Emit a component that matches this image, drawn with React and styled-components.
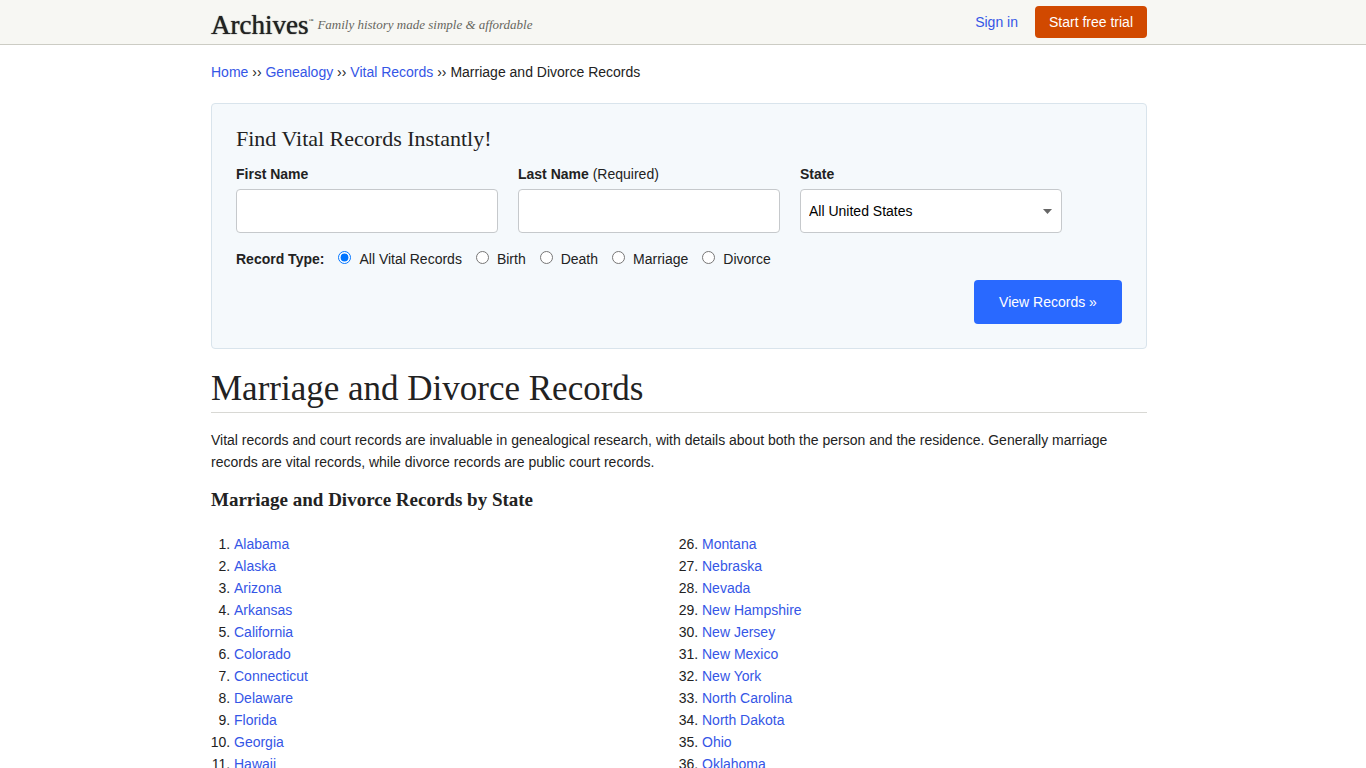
import { useState } from "react";
import styled, { createGlobalStyle, ThemeProvider } from "styled-components";

const theme = {
  sans: '"Liberation Sans", Arial, sans-serif',
  serif: '"Liberation Serif", Georgia, serif',
  text: "#222",
  link: "#3556e6",
  blue: "#2969ff",
  orange: "#d14900",
  radius: "4px",
};

const GlobalStyle = createGlobalStyle`
  * {
    box-sizing: border-box;
  }

  body {
    margin: 0;
    background: #fff;
    color: ${theme.text};
    font-family: ${theme.sans};
    font-size: 14px;
    line-height: 22px;
  }
`;

const Link = styled.a`
  color: ${({ theme }) => theme.link};
  text-decoration: none;

  &:hover {
    text-decoration: underline;
  }
`;

const Bar = styled.header`
  background: #f7f7f3;
  border-bottom: 1px solid #ccccc4;
  padding-right: 8px;
`;

const Container = styled.div`
  max-width: 936px;
  margin: 0 auto;
`;

const BarInner = styled(Container)`
  display: flex;
  justify-content: space-between;
  align-items: center;
  min-height: 44px;
`;

const Brand = styled.a`
  display: flex;
  align-items: center;
  padding-top: 6px;
  color: ${({ theme }) => theme.text};
  font-family: ${({ theme }) => theme.serif};
  text-decoration: none;
`;

const Logo = styled.span`
  font-size: 27px;
  line-height: 32px;
  text-shadow: 0 0 1px ${({ theme }) => theme.text};
`;

const Trademark = styled.sup`
  align-self: flex-start;
  margin-top: 8px;
  font-size: 5px;
  line-height: 8px;
`;

const Tagline = styled.span`
  margin-left: 4px;
  color: #66665e;
  font-size: 13px;
  font-style: italic;
`;

const Account = styled.nav`
  display: flex;
  align-items: center;
  gap: 17px;
`;

const TrialButton = styled.button`
  height: 32px;
  padding: 0 14px;
  border: none;
  border-radius: ${({ theme }) => theme.radius};
  background: ${({ theme }) => theme.orange};
  color: #fff;
  font: inherit;
  cursor: pointer;
`;

const Page = styled.main`
  padding-right: 8px;
  padding-bottom: 40px;
`;

const Breadcrumb = styled.nav`
  padding: 16px 0 20px;
`;

const Panel = styled.form`
  display: flex;
  flex-direction: column;
  padding: 24px;
  border: 1px solid #d9e4ec;
  border-radius: ${({ theme }) => theme.radius};
  background: #f5f9fc;
`;

const PanelTitle = styled.h2`
  margin: 0 0 13px;
  font-family: ${({ theme }) => theme.serif};
  font-size: 22px;
  font-weight: normal;
  line-height: 22px;
`;

const Fields = styled.div`
  display: flex;
  gap: 20px;
`;

const Field = styled.label`
  display: flex;
  flex: 0 1 262px;
  flex-direction: column;
  gap: 4px;
  min-width: 0;
`;

const TextInput = styled.input`
  width: 100%;
  height: 44px;
  padding: 0 8px;
  border: 1px solid #c6c9cc;
  border-radius: ${({ theme }) => theme.radius};
  background: #fff;
  font: inherit;
`;

const SelectWrap = styled.span`
  display: grid;
  align-items: center;

  & > * {
    grid-area: 1 / 1;
  }
`;

const Select = styled(TextInput)`
  appearance: none;
  color: #000;
`;

const Arrow = styled.svg`
  justify-self: end;
  margin-right: 10px;
  pointer-events: none;
`;

const RecordTypes = styled.fieldset`
  display: flex;
  align-items: center;
  gap: 14px;
  margin: 15px 0 10px;
  padding: 0;
  border: none;
`;

const Radio = styled.label`
  display: flex;
  align-items: center;
  gap: 8px;

  input {
    width: 13px;
    height: 13px;
    margin: 0 0 3px;
  }
`;

const SubmitButton = styled.button`
  align-self: flex-end;
  width: 148px;
  height: 44px;
  border: none;
  border-radius: ${({ theme }) => theme.radius};
  background: ${({ theme }) => theme.blue};
  color: #fff;
  font: inherit;
  cursor: pointer;
`;

const Title = styled.h1`
  margin: 18px 0 16px;
  padding-bottom: 1px;
  border-bottom: 1px solid #d8d8d4;
  font-family: ${({ theme }) => theme.serif};
  font-size: 35px;
  font-weight: normal;
  line-height: 44px;
`;

const Intro = styled.p`
  margin: 16px 0;
`;

const Subtitle = styled.h3`
  margin: 16px 0 22px;
  font-family: ${({ theme }) => theme.serif};
  font-size: 19px;
  line-height: 22px;
`;

const StateColumns = styled.div`
  display: grid;
  grid-template-columns: 1fr 1fr;
`;

const StateList = styled.ol`
  margin: 0;
  padding-left: 23px;
`;

const crumbs = ["Home", "Genealogy", "Vital Records"];

const recordTypes = ["All Vital Records", "Birth", "Death", "Marriage", "Divorce"];

const states = [
  "Alabama", "Alaska", "Arizona", "Arkansas", "California",
  "Colorado", "Connecticut", "Delaware", "Florida", "Georgia",
  "Hawaii", "Idaho", "Illinois", "Indiana", "Iowa",
  "Kansas", "Kentucky", "Louisiana", "Maine", "Maryland",
  "Massachusetts", "Michigan", "Minnesota", "Mississippi", "Missouri",
  "Montana", "Nebraska", "Nevada", "New Hampshire", "New Jersey",
  "New Mexico", "New York", "North Carolina", "North Dakota", "Ohio",
  "Oklahoma", "Oregon", "Pennsylvania", "Rhode Island", "South Carolina",
  "South Dakota", "Tennessee", "Texas", "Utah", "Vermont",
  "Virginia", "Washington", "West Virginia", "Wisconsin", "Wyoming",
];

function Header() {
  return (
    <Bar>
      <BarInner>
        <Brand href="#">
          <Logo>Archives</Logo>
          <Trademark>™</Trademark>
          <Tagline>Family history made simple &amp; affordable</Tagline>
        </Brand>
        <Account>
          <Link href="#">Sign in</Link>
          <TrialButton type="button">Start free trial</TrialButton>
        </Account>
      </BarInner>
    </Bar>
  );
}

function SearchPanel() {
  const [type, setType] = useState(recordTypes[0]);

  return (
    <Panel onSubmit={(e) => e.preventDefault()}>
      <PanelTitle>Find Vital Records Instantly!</PanelTitle>
      <Fields>
        <Field>
          <strong>First Name</strong>
          <TextInput type="text" name="firstName" />
        </Field>
        <Field>
          <span>
            <strong>Last Name</strong> (Required)
          </span>
          <TextInput type="text" name="lastName" />
        </Field>
        <Field>
          <strong>State</strong>
          <SelectWrap>
            <Select as="select" name="state">
              <option>All United States</option>
              {states.map((state) => (
                <option key={state}>{state}</option>
              ))}
            </Select>
            <Arrow width="9" height="5" viewBox="0 0 9 5" aria-hidden="true">
              <path d="M0 0h9L4.5 5z" fill="#666" />
            </Arrow>
          </SelectWrap>
        </Field>
      </Fields>
      <RecordTypes aria-label="Record Type">
        <strong>Record Type:</strong>
        {recordTypes.map((name) => (
          <Radio key={name}>
            <input
              type="radio"
              name="recordType"
              checked={type === name}
              onChange={() => setType(name)}
            />
            {name}
          </Radio>
        ))}
      </RecordTypes>
      <SubmitButton type="submit">View Records »</SubmitButton>
    </Panel>
  );
}

function States({ names, start }) {
  return (
    <StateList start={start}>
      {names.map((name) => (
        <li key={name}>
          <Link href="#">{name}</Link>
        </li>
      ))}
    </StateList>
  );
}

export default function App() {
  return (
    <ThemeProvider theme={theme}>
      <GlobalStyle />
      <Header />
      <Page>
        <Container>
          <Breadcrumb>
            {crumbs.map((crumb) => (
              <span key={crumb}>
                <Link href="#">{crumb}</Link> ››{" "}
              </span>
            ))}
            Marriage and Divorce Records
          </Breadcrumb>
          <SearchPanel />
          <Title>Marriage and Divorce Records</Title>
          <Intro>
            Vital records and court records are invaluable in genealogical research, with details
            about both the person and the residence. Generally marriage records are vital records,
            while divorce records are public court records.
          </Intro>
          <Subtitle>Marriage and Divorce Records by State</Subtitle>
          <StateColumns>
            <States names={states.slice(0, 25)} start={1} />
            <States names={states.slice(25)} start={26} />
          </StateColumns>
        </Container>
      </Page>
    </ThemeProvider>
  );
}
